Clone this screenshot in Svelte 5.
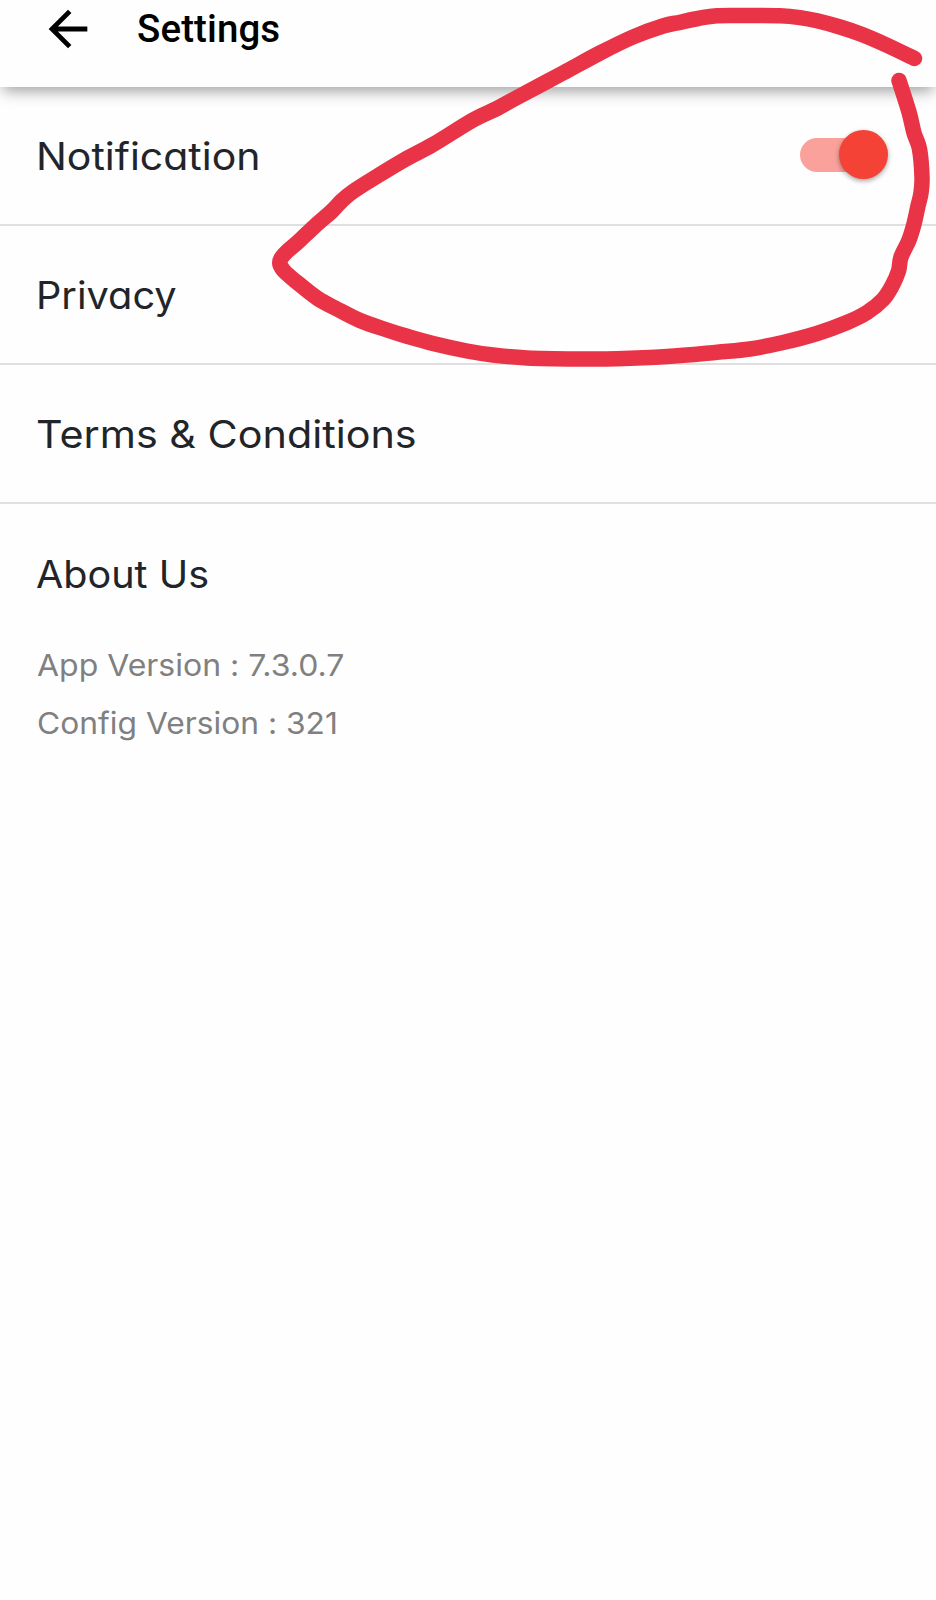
<script>
  const rows = [
    { label: 'Notification', stretch: 1.078, toggle: true },
    { label: 'Privacy', stretch: 1.045 },
    { label: 'Terms & Conditions', stretch: 1.087 },
    { label: 'About Us', stretch: 1.041 }
  ];
  const versions = [
    { text: 'App Version : 7.3.0.7', stretch: 1.066 },
    { text: 'Config Version : 321', stretch: 1.059 }
  ];

  let notifications = $state(true);

  // Hand-drawn marker stroke, sampled along its centre line.
  const points = [
    [914.5, 58.5], [888, 45.7], [862, 34.5], [840, 27], [817, 20.8], [800, 17.6], [780, 15.8], [750, 15.6], [717, 15.7],
    [698, 18.5], [680, 22.3], [663, 26], [633, 37], [600, 53], [563, 73], [517, 97.5], [497, 108.5],
    [473, 120], [433, 144.5], [405, 159.5], [375, 177.5], [353, 191.5], [342, 200.5], [332, 211], [315, 226],
    [298, 242], [287, 251.5], [281, 258.5], [280, 264.5], [285, 272], [296, 281.5], [317, 298], [337, 309], [360, 320.5],
    [387, 330], [407, 336.3], [433, 343.5], [467, 351], [493, 355], [527, 357.9], [577, 358.9], [617, 358.7],
    [667, 356.5], [717, 352.2], [750, 349], [783, 342.5], [817, 333.5], [847, 322.5], [867, 312.5], [883, 299.5],
    [892, 286], [898.5, 271], [901, 257], [909, 240], [914, 224], [918, 206], [921, 193], [922, 177],
    [919.5, 149], [914, 133], [909, 112], [899, 80.5]
  ];

  const stroke = points.slice(1).reduce((d, p, i) => {
    const a = points[Math.max(i - 1, 0)];
    const b = points[i];
    const c = points[Math.min(i + 2, points.length - 1)];
    return `${d}C${b[0] + (p[0] - a[0]) / 6} ${b[1] + (p[1] - a[1]) / 6} ${p[0] - (c[0] - b[0]) / 6} ${p[1] - (c[1] - b[1]) / 6} ${p[0]} ${p[1]}`;
  }, `M${points[0].join(' ')}`);
</script>

<main class="screen">
  <header class="bar">
    <button class="back" aria-label="Back">
      <svg viewBox="0 0 24 24" width="58" height="58">
        <path d="M20 11H7.83l5.59-5.59L12 4l-8 8 8 8 1.41-1.41L7.83 13H20z" />
      </svg>
    </button>
    <h1>Settings</h1>
  </header>

  <ul class="list">
    {#each rows as row}
      <li class="row">
        <span class="label" style="transform: scaleX({row.stretch})">{row.label}</span>
        {#if row.toggle}
          <button
            class="switch"
            class:on={notifications}
            role="switch"
            aria-checked={notifications}
            aria-label={row.label}
            onclick={() => (notifications = !notifications)}
          ><i class="thumb"></i></button>
        {/if}
      </li>
    {/each}
  </ul>

  <section class="versions">
    {#each versions as v}
      <p class="label" style="transform: scaleX({v.stretch})">{v.text}</p>
    {/each}
  </section>

  <svg class="marker" viewBox="0 0 936 400" width="936" height="400" aria-hidden="true">
    <path d={stroke} />
  </svg>
</main>

<style>
  :global(body) {
    background: #fefefe;
  }
  .screen {
    position: relative;
    width: 936px;
    height: 1600px;
    overflow: hidden;
    background: #fefefe;
    font-family: Inter, sans-serif;
    font-weight: 380;
    font-feature-settings: 'cv11', 'calt' 0;
  }
  .bar {
    display: flex;
    align-items: center;
    gap: 40px;
    box-sizing: border-box;
    height: 87px;
    padding: 0 0 30px 39px;
    background: #fefefe;
    box-shadow: 0 7px 14px -3px rgba(0, 0, 0, 0.38);
  }
  button {
    padding: 0;
    border: 0;
    background: none;
  }
  .back,
  .back svg {
    display: block;
  }
  h1 {
    margin: 0;
    padding-top: 1px;
    font: 500 38.5px/56px Roboto, sans-serif;
    letter-spacing: 0.1px;
    color: #000;
  }
  .list {
    margin: 0;
    padding: 0;
    list-style: none;
  }
  .label {
    transform-origin: left center;
    white-space: nowrap;
  }
  .row {
    display: flex;
    align-items: center;
    justify-content: space-between;
    box-sizing: border-box;
    height: 139px;
    padding: 1px 48px 0 36px;
    border-bottom: 2px solid #e0e0e0;
    font-size: 38px;
    line-height: 56px;
    color: #212529;
  }
  .row:last-child {
    height: 132px;
    padding-top: 8px;
    border: 0;
  }
  .switch {
    display: flex;
    align-items: center;
    width: 88px;
    height: 34px;
    border-radius: 17px;
    margin-top: -3px;
    background: linear-gradient(#bbb, #bbb) left / 80px 34px no-repeat;
  }
  .switch.on {
    justify-content: flex-end;
    background: linear-gradient(#faa19b, #faa19b) left / 80px 34px no-repeat;
  }
  .thumb {
    width: 49px;
    height: 49px;
    flex: none;
    border-radius: 50%;
    background: #f44336;
    box-shadow: 0 2px 5px rgba(0, 0, 0, 0.35);
  }
  .versions {
    padding-left: 36.5px;
    font-size: 30px;
    line-height: 58px;
    color: #808080;
  }
  .versions p {
    width: max-content;
    margin: 0;
  }
  .marker {
    position: absolute;
    top: 0;
    left: 0;
    pointer-events: none;
  }
  .marker path {
    fill: none;
    stroke: #e93448;
    stroke-width: 15.5;
    stroke-linecap: round;
    stroke-linejoin: round;
  }
</style>
